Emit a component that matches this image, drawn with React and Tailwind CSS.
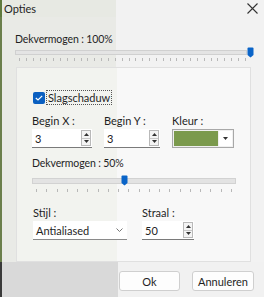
import React from "react";

function Spin() {
  return (
    <div className="flex flex-col w-[10px] h-[16px] border border-[#b9b9b9] bg-[#f4f4f4]">
      <div className="flex-1 flex items-center justify-center border-b border-[#c8c8c8]">
        <svg width="5" height="3" viewBox="0 0 5 3"><path d="M0 3L2.5 0L5 3Z" fill="#333" /></svg>
      </div>
      <div className="flex-1 flex items-center justify-center">
        <svg width="5" height="3" viewBox="0 0 5 3"><path d="M0 0L2.5 3L5 0Z" fill="#333" /></svg>
      </div>
    </div>
  );
}

function NumInput({ value, width }) {
  return (
    <div className={`flex items-center justify-between ${width} h-[19px] bg-white border-b border-[#7a7a7a] pl-[3px] pr-[1px]`}>
      <span className="text-[11px] leading-none text-[#222]">{value}</span>
      <Spin />
    </div>
  );
}

function Ticks({ count }) {
  return (
    <div className="flex justify-between px-[4px] h-[3px]">
      {Array.from({ length: count }).map((_, i) => (
        <div key={i} className="w-px h-[3px] bg-[#b8b8b8]" />
      ))}
    </div>
  );
}

function Thumb() {
  return (
    <svg width="7" height="11" viewBox="0 0 7 11">
      <path d="M0.5 1.5Q0.5 0.5 1.5 0.5H5.5Q6.5 0.5 6.5 1.5V8L3.5 10.5L0.5 8Z" fill="#0a64c8" />
    </svg>
  );
}

export default function App() {
  return (
    <div
      className="w-[264px] h-[297px] overflow-hidden flex flex-col text-[#1f1f1f]"
      style={{ fontFamily: 'Lato, "Noto Sans", sans-serif' }}
    >
      {/* title bar */}
      <div className="h-[17px] shrink-0 flex items-center justify-between pl-[4px] pr-[6px] bg-[linear-gradient(to_right,#5f7a3e_0px,#5f7a3e_2px,#e7e9e3_2px,#e7e9e3_116px,#f2f2f2_116px)]">
        <span className="text-[11px] leading-none">Opties</span>
        <svg width="11" height="11" viewBox="0 0 11 11"><path d="M0.5 0.5L10.5 10.5M10.5 0.5L0.5 10.5" stroke="#333" strokeWidth="1.1" /></svg>
      </div>
      {/* body */}
      <div className="flex-1 flex flex-col bg-[linear-gradient(to_right,#6b7f4c_0px,#6b7f4c_2px,#e9eae6_2px,#e9eae6_116px,#f2f2f2_116px)]">
        <div className="pl-[15px] pr-[10px] pt-[17px]">
          <div className="text-[10.5px] leading-none h-[11px] tracking-[-0.1px]">Dekvermogen : 100%</div>
          <div className="flex items-center mt-[2px] h-[11px]">
            <div className="flex-1 h-[5px] bg-[#e4e4e4] border border-[#d0d0d0]" />
            <Thumb />
          </div>
          <div className="pr-[4px]"><Ticks count={34} /></div>
        </div>

        {/* group panel */}
        <div className="ml-[16px] mr-[13px] mt-[6px] h-[195px] shrink-0 border border-[#e0e0e0] bg-[linear-gradient(to_right,#f2f3ef_0px,#f2f3ef_100px,#f8f8f8_100px)] pl-[15px] pr-[14px] pt-[22px]">
          <div className="flex items-center gap-[1px] h-[15px] ml-[1px]">
            <div className="w-[12px] h-[12px] rounded-[2px] bg-[#0a5fc0] flex items-center justify-center">
              <svg width="8" height="6" viewBox="0 0 8 6"><path d="M0.8 3L3 5L7.2 0.8" stroke="white" strokeWidth="1.2" fill="none" /></svg>
            </div>
            <div className="border border-dotted border-[#555] px-[1px] h-[15px] flex items-center text-[11px] leading-none">Slagschaduw</div>
          </div>

          <div className="flex mt-[10px]">
            <div className="flex flex-col w-[72px]">
              <span className="text-[11px] leading-none h-[11px] mb-[3px]">Begin X :</span>
              <NumInput value="3" width="w-[60px]" />
            </div>
            <div className="flex flex-col w-[68px]">
              <span className="text-[11px] leading-none h-[11px] mb-[3px]">Begin Y :</span>
              <NumInput value="3" width="w-[56px]" />
            </div>
            <div className="flex flex-col">
              <span className="text-[11px] leading-none h-[11px] mb-[3px]">Kleur :</span>
              <div className="flex items-center w-[62px] h-[19px] border border-[#a8a8a8] bg-[#f0f0f0] p-[1px] gap-[1px]">
                <div className="flex-1 h-full bg-[#7b9a4d]" />
                <div className="w-[13px] h-full flex items-center justify-center bg-white">
                  <svg width="5" height="3" viewBox="0 0 5 3"><path d="M0 0L2.5 3L5 0Z" fill="#333" /></svg>
                </div>
              </div>
            </div>
          </div>

          <div className="mt-[10px] text-[10.5px] leading-none h-[11px] tracking-[-0.1px]">Dekvermogen : 50%</div>
          <div className="flex items-center mt-[6px] h-[11px] relative w-[204px]">
            <div className="w-full h-[6px] bg-[#e3e3e3] border border-[#d2d2d2]" />
            <div className="absolute left-[89px] top-0"><Thumb /></div>
          </div>
          <div className="mt-[3px] w-[204px]"><Ticks count={20} /></div>

          <div className="flex mt-[15px] ml-[1px]">
            <div className="flex flex-col w-[109px]">
              <span className="text-[11px] leading-none h-[11px] mb-[3px]">Stijl :</span>
              <div className="flex items-center justify-between w-[94px] h-[19px] bg-white border-b border-[#8a8a8a] pl-[3px] pr-[4px]">
                <span className="text-[11px] leading-none">Antialiased</span>
                <svg width="7" height="4" viewBox="0 0 7 4"><path d="M0.5 0.5L3.5 3.5L6.5 0.5" stroke="#777" fill="none" /></svg>
              </div>
            </div>
            <div className="flex flex-col">
              <span className="text-[11px] leading-none h-[11px] mb-[3px]">Straal :</span>
              <NumInput value="50" width="w-[52px]" />
            </div>
          </div>
        </div>

        {/* buttons */}
        <div className="flex-1 flex justify-end items-start gap-[12px] pr-[10px] pt-[9px] bg-[linear-gradient(to_right,#3a3a3a_0px,#3a3a3a_2px,#d9d9d9_2px,#d9d9d9_118px,#f1f1f1_118px)]">
          <div className="w-[61px] h-[20px] flex items-center justify-center bg-[#fdfdfd] border border-[#cfcfcf] rounded-[3px] text-[11px] leading-none">Ok</div>
          <div className="w-[62px] h-[20px] flex items-center justify-center bg-[#fdfdfd] border border-[#cfcfcf] rounded-[3px] text-[11px] leading-none">Annuleren</div>
        </div>
      </div>
    </div>
  );
}
